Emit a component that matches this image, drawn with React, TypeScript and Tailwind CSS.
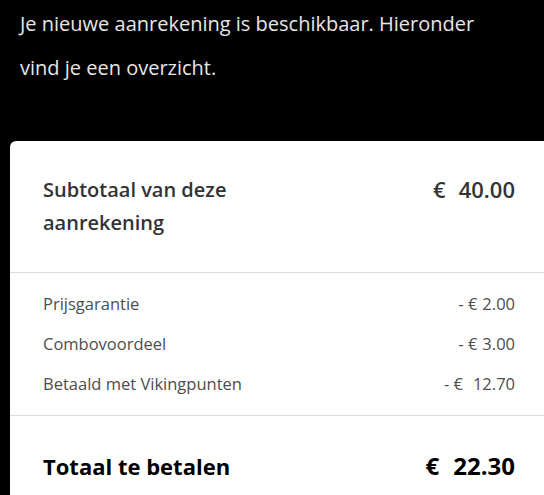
const items = [
  { label: 'Prijsgarantie', amount: '2.00', gap: 'gap-[5px]' },
  { label: 'Combovoordeel', amount: '3.00', gap: 'gap-[5px]' },
  { label: 'Betaald met Vikingpunten', amount: '12.70', gap: 'gap-[10px]' }
];

export default function App() {
  return (
    <div className="min-h-[495px] bg-black font-['Open_Sans',sans-serif]">
      <p className="w-[500px] pl-5 pt-[2px] text-[20px] leading-[44px] text-[#e6e6e6]">
        Je nieuwe aanrekening is beschikbaar. Hieronder vind je een overzicht.
      </p>

      <div className="ml-[10px] mt-[51px] rounded-tl-[6px] bg-white">
        {/* Subtotal */}
        <div className="flex items-start justify-between pl-[33px] pr-[29px] pt-[32px] pb-[33px] border-b border-[#dcdcdc]">
          <div className="w-[200px] text-[20px] font-semibold leading-[33px] text-[#333333]">
            Subtotaal van deze aanrekening
          </div>
          <div className="flex gap-[13px] text-[22px] font-semibold leading-[33px] text-[#333333]">
            <span>€</span>
            <span>40.00</span>
          </div>
        </div>

        {/* Discounts */}
        <div className="py-[11px] pl-[33px] pr-[29px] border-b border-[#dcdcdc]">
          {items.map((item) => (
            <div
              key={item.label}
              className="flex h-10 items-center justify-between text-[16.5px] text-[#4d4d4d]"
            >
              <span>{item.label}</span>
              <span className={`flex ${item.gap}`}>
                <span>- €</span>
                <span>{item.amount}</span>
              </span>
            </div>
          ))}
        </div>

        {/* Total */}
        <div className="flex items-center justify-between pl-[33px] pr-[29px] pt-[35px] pb-[20px] leading-[30px] font-bold text-black">
          <span className="text-[22px]">Totaal te betalen</span>
          <span className="flex gap-[14px] text-[24px]">
            <span>€</span>
            <span>22.30</span>
          </span>
        </div>
      </div>
    </div>
  );
}
